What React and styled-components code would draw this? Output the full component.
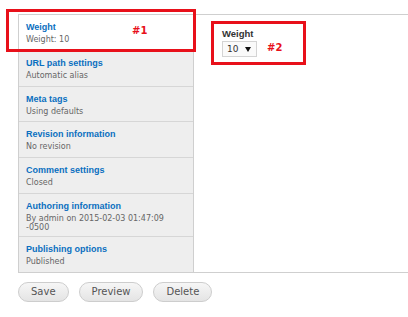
import React from 'react';
import styled, { createGlobalStyle } from 'styled-components';

const GlobalStyle = createGlobalStyle`
  html, body {
    margin: 0;
    padding: 0;
    background: #fff;
    font-family: "DejaVu Sans", Verdana, sans-serif;
  }
`;

const tabs = [
  { title: 'Weight', summary: 'Weight: 10', h: 36, active: true },
  { title: 'URL path settings', summary: 'Automatic alias', h: 36 },
  { title: 'Meta tags', summary: 'Using defaults', h: 35 },
  { title: 'Revision information', summary: 'No revision', h: 36 },
  { title: 'Comment settings', summary: 'Closed', h: 36 },
  { title: 'Authoring information', summary: 'By admin on 2015-02-03 01:47:09 -0500', h: 43 },
  { title: 'Publishing options', summary: 'Published', h: 35 },
];

const App = () => {
  return (
    <>
      <GlobalStyle />
      <Page>
        <Frame>
          <TabList>
            {tabs.map((t) => (
              <Tab key={t.title} $active={t.active} $h={t.h}>
                <TabTitle>{t.title}</TabTitle>
                <TabSummary>{t.summary}</TabSummary>
              </Tab>
            ))}
          </TabList>
          <Pane>
            <Callout>
              <Field>
                <FieldLabel>Weight</FieldLabel>
                <SelectBox>
                  <span>10</span>
                  <svg width="6" height="5" viewBox="0 0 6 5">
                    <path d="M0 0 H6 L3 5 Z" fill="#111" />
                  </svg>
                </SelectBox>
              </Field>
              <Marker>#2</Marker>
            </Callout>
          </Pane>
        </Frame>
        <Actions>
          <Button>Save</Button>
          <Button>Preview</Button>
          <Button>Delete</Button>
        </Actions>
        <TabCallout>
          <Marker>#1</Marker>
        </TabCallout>
      </Page>
    </>
  );
};

const Page = styled.div`
  position: relative;
  width: 408px;
  height: 317px;
  overflow: hidden;
  padding: 14px 0 0 18px;
  box-sizing: border-box;
`;

const Frame = styled.div`
  display: flex;
  width: 420px;
  height: 259px;
  box-sizing: border-box;
  border: 1px solid #cfcfcf;
  border-right: none;
`;

const TabList = styled.div`
  display: flex;
  flex-direction: column;
  width: 174px;
  flex: none;
  background: #eeeeee;
  border-right: 1px solid #cfcfcf;
`;

const Tab = styled.div`
  padding: 7px 7px 0;
  height: ${(p) => p.$h}px;
  box-sizing: border-box;
  border-bottom: 1px solid #d6d6d6;
  background: ${(p) => (p.$active ? '#fff' : 'transparent')};
  margin-right: ${(p) => (p.$active ? '-1px' : '0')};

  &:last-child {
    border-bottom: none;
  }
`;

const TabTitle = styled.div`
  font-family: "Liberation Sans", Arial, sans-serif;
  font-size: 9px;
  font-weight: bold;
  color: #0a6fc0;
  line-height: 11px;
`;

const TabSummary = styled.div`
  font-size: 8px;
  color: #666;
  line-height: 9px;
  margin-top: 2px;
`;

const Pane = styled.div`
  flex: 1;
  padding: 6px 0 0 17px;
  background: #fff;
`;

const Callout = styled.div`
  display: flex;
  align-items: flex-start;
  gap: 10px;
  width: 95px;
  height: 44px;
  box-sizing: border-box;
  border: 3px solid #e8101a;
  padding: 4px 0 0 8px;
`;

const Field = styled.div`
  display: flex;
  flex-direction: column;
  gap: 2px;
`;

const FieldLabel = styled.div`
  font-family: "Liberation Sans", Arial, sans-serif;
  font-size: 9.5px;
  font-weight: bold;
  color: #333;
  line-height: 11px;
`;

const SelectBox = styled.div`
  display: flex;
  align-items: center;
  justify-content: space-between;
  width: 35px;
  height: 16px;
  box-sizing: border-box;
  padding: 0 5px 0 4px;
  border: 1px solid #d4d4d4;
  background: #fafafa;
  font-size: 9px;
  color: #333;
`;

const Marker = styled.div`
  font-size: 10px;
  font-weight: bold;
  color: #e8101a;
  margin-top: 14px;
`;

const TabCallout = styled.div`
  position: absolute;
  left: 6px;
  top: 9px;
  width: 190px;
  height: 43px;
  box-sizing: border-box;
  border: 3px solid #e8101a;
  padding-left: 123px;

  ${Marker} {
    margin-top: 13px;
  }
`;

const Actions = styled.div`
  display: flex;
  gap: 10px;
  margin-top: 9px;
`;

const Button = styled.button`
  height: 20px;
  padding: 0 12px;
  border: 1px solid #cdcdcd;
  border-radius: 10px;
  background: linear-gradient(#f6f6f6, #e4e4e4);
  font-family: "DejaVu Sans", Verdana, sans-serif;
  font-size: 10px;
  color: #555;
  line-height: 18px;
`;

export default App;
